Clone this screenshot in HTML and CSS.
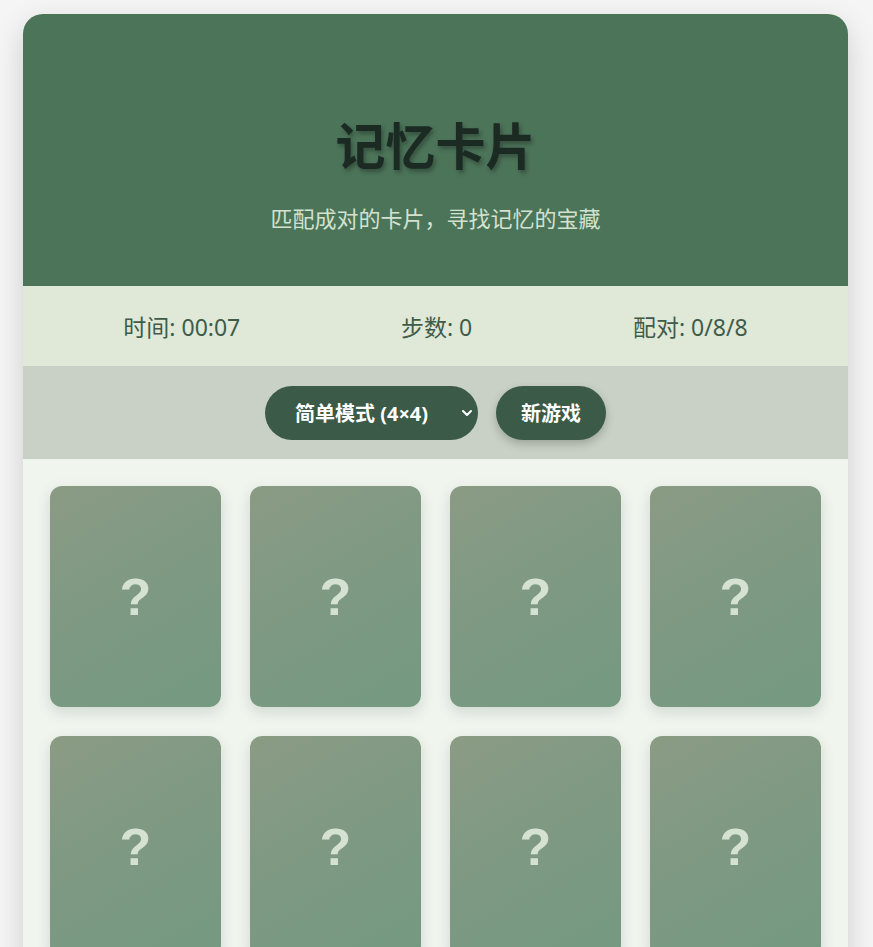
FILE: index.html
```html
<!DOCTYPE html>
<html lang="zh-CN">
<head>
<meta charset="utf-8">
<title>记忆卡片</title>
<link rel="stylesheet" href="styles.css">
</head>
<body>
<div class="app">
  <header class="header">
    <h1 class="title">记忆卡片</h1>
    <p class="subtitle">匹配成对的卡片，寻找记忆的宝藏</p>
  </header>
  <div class="stats">
    <div class="stat">时间: 00:07</div>
    <div class="stat">步数: 0</div>
    <div class="stat">配对: 0/8/8</div>
  </div>
  <div class="controls">
    <div class="select">简单模式 (4×4)<span class="chev"><svg width="12" height="8" viewBox="0 0 12 8"><path d="M2 2 L6 6 L10 2" fill="none" stroke="#fff" stroke-width="2" stroke-linecap="round" stroke-linejoin="round"/></svg></span></div>
    <button class="btn">新游戏</button>
  </div>
  <div class="board">
    <div class="card"><span class="q">?</span></div>
    <div class="card"><span class="q">?</span></div>
    <div class="card"><span class="q">?</span></div>
    <div class="card"><span class="q">?</span></div>
    <div class="card"><span class="q">?</span></div>
    <div class="card"><span class="q">?</span></div>
    <div class="card"><span class="q">?</span></div>
    <div class="card"><span class="q">?</span></div>
  </div>
</div>
</body>
</html>
```

FILE: styles.css
```css
html, body {
  margin: 0;
  padding: 0;
  height: 100%;
  overflow: hidden;
}
body {
  background: #f5f5f5;
  font-family: "Noto Sans", "Noto Sans CJK SC", sans-serif;
  padding-top: 14px;
  box-sizing: border-box;
}
.app {
  width: 825px;
  margin-left: 23px;
  border-radius: 20px 20px 0 0;
  overflow: hidden;
  box-shadow: 0 10px 30px rgba(0,0,0,0.16);
  background: #f0f5ee;
}
.header {
  background: #4c7459;
  height: 272px;
  display: flex;
  flex-direction: column;
  align-items: center;
  padding-top: 99px;
  box-sizing: border-box;
}
.title {
  margin: 0;
  font-size: 50px;
  font-weight: 700;
  color: #1b2a23;
  line-height: 60px;
  text-shadow: 2px 3px 4px rgba(0,0,0,0.3);
  font-family: "Noto Sans CJK SC", sans-serif;
}
.subtitle {
  margin: 30px 0 0;
  font-size: 22px;
  color: #d3e2cf;
  line-height: 28px;
  font-family: "Noto Sans CJK SC", sans-serif;
}
.stats {
  background: #e0e8d8;
  height: 80px;
  display: flex;
  justify-content: space-around;
  align-items: center;
  padding: 0 20px;
  color: #3e5c49;
  font-size: 23px;
}
.controls {
  background: #c9d1c6;
  height: 93px;
  display: flex;
  justify-content: center;
  align-items: center;
  gap: 18px;
}
.select {
  height: 54px;
  width: 213px;
  box-sizing: border-box;
  border-radius: 27px;
  background: #3b5a48;
  color: #fff;
  font-weight: 700;
  font-size: 20px;
  display: flex;
  align-items: center;
  padding-left: 30px;
  position: relative;
}
.chev {
  position: absolute;
  right: 5px;
  top: 23px;
  display: flex;
}
.btn {
  height: 54px;
  width: 110px;
  border: none;
  border-radius: 27px;
  background: #3b5a48;
  color: #fff;
  font-weight: 700;
  font-size: 20px;
  font-family: "Noto Sans CJK SC", sans-serif;
  box-shadow: 0 4px 10px rgba(0,0,0,0.22);
  padding: 0;
}
.board {
  display: grid;
  grid-template-columns: repeat(4, 171px);
  gap: 29px;
  padding: 27px;
}
.card {
  height: 221px;
  border-radius: 12px;
  background: linear-gradient(150deg, #8b9b84 0%, #7f9983 45%, #749981 100%);
  box-shadow: 0 5px 14px rgba(60,90,70,0.18);
  display: flex;
  align-items: center;
  justify-content: center;
}
.q {
  font-family: "Liberation Sans", sans-serif;
  font-weight: 700;
  font-size: 52px;
  color: #d5e1d3;
  line-height: 1;
}
```
